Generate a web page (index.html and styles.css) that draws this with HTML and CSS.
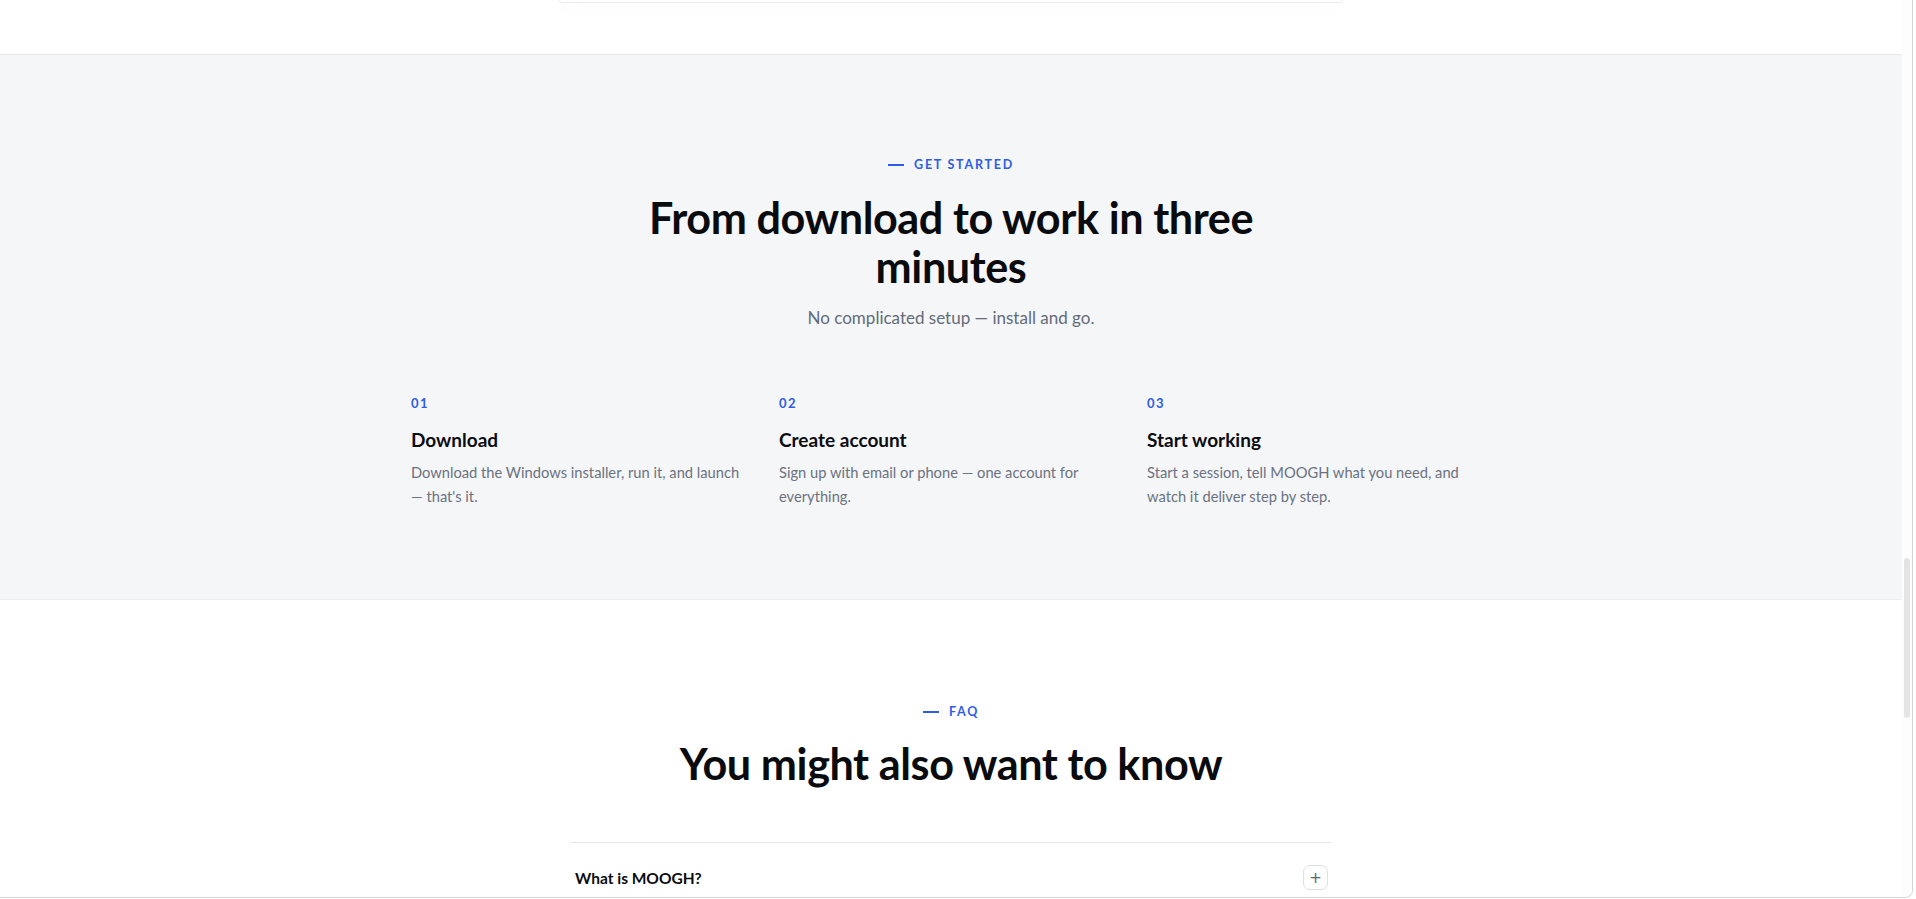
FILE: index.html
```html
<!DOCTYPE html>
<html lang="en">
<head>
  <meta charset="UTF-8">
  <title>MOOGH</title>
  <link rel="stylesheet" href="styles.css">
</head>
<body>

<div class="window">
  <div class="viewport">

    <div class="top-strip">
      <div class="card-edge"></div>
    </div>

    <section class="steps-section">
      <div class="eyebrow"><span class="dash"></span>GET STARTED</div>
      <h2 class="section-title narrow">From download to work in three minutes</h2>
      <p class="section-sub">No complicated setup — install and go.</p>

      <div class="steps">
        <div class="step">
          <div class="step-num">01</div>
          <h3>Download</h3>
          <p>Download the Windows installer, run it, and launch — that's it.</p>
        </div>
        <div class="step">
          <div class="step-num">02</div>
          <h3>Create account</h3>
          <p>Sign up with email or phone — one account for everything.</p>
        </div>
        <div class="step">
          <div class="step-num">03</div>
          <h3>Start working</h3>
          <p>Start a session, tell MOOGH what you need, and watch it deliver step by step.</p>
        </div>
      </div>
    </section>

    <section class="faq-section">
      <div class="eyebrow"><span class="dash"></span>FAQ</div>
      <h2 class="section-title">You might also want to know</h2>

      <div class="faq-list">
        <div class="faq-item">
          <span class="faq-q">What is MOOGH?</span>
          <button class="faq-toggle">+</button>
        </div>
      </div>
    </section>

  </div>
  <div class="scrollbar"><div class="thumb"></div></div>
</div>

</body>
</html>
```

FILE: styles.css
```css
html, body { margin: 0; padding: 0; background: #fff; }
body { font-family: Lato, "Noto Sans", sans-serif; color: #0b0c10; height: 899px; overflow: hidden; }

.window {
  box-sizing: border-box;
  width: 1913px;
  height: 898px;
  display: flex;
  border-right: 1px solid #d4d4d4;
  border-bottom: 1px solid #d4d4d4;
  border-bottom-right-radius: 8px;
  overflow: hidden;
}
.viewport { flex: 1; overflow: hidden; }

.scrollbar { width: 10px; background: #fdfdfd; }
.thumb {
  width: 6px;
  height: 160px;
  margin: 558px 0 0 2px;
  border-radius: 3px;
  background: #e4e4e4;
}

/* bottom of the pricing card from the section above */
.top-strip {
  height: 54px;
  border-bottom: 1px solid #e5e7eb;
  background: #fff;
}
.card-edge {
  width: 782px;
  height: 2px;
  margin: 0 auto;
  border: 1px solid #ededed;
  border-top: none;
  border-radius: 0 0 14px 14px;
  box-shadow: 0 4px 18px rgba(15, 23, 42, 0.06);
}

.steps-section {
  background: #f5f6f8;
  padding: 100px 0 91px;
  border-bottom: 1px solid #eceef1;
}
.faq-section { padding: 102px 0 0; }

.eyebrow {
  display: flex;
  justify-content: center;
  align-items: center;
  gap: 10px;
  font-size: 12.5px;
  line-height: 20px;
  font-weight: 700;
  letter-spacing: 0.14em;
  color: #2f5ce6;
}
.dash { width: 16px; height: 2px; background: #2f5ce6; }

.section-title {
  margin: 18px auto 0;
  font-size: 43.2px;
  line-height: 49px;
  font-weight: 700;
  letter-spacing: -0.01em;
  text-align: center;
  color: #0a0b0f;
}
.section-title.narrow { max-width: 640px; }
.faq-section .section-title { margin-top: 17px; }

.section-sub {
  margin: 14px 0 0;
  text-align: center;
  font-size: 17px;
  line-height: 26px;
  color: #646b78;
}

.steps {
  display: grid;
  grid-template-columns: repeat(3, 1fr);
  gap: 24px;
  max-width: 1080px;
  margin: 63px auto 0;
}
.step-num {
  font-size: 13px;
  line-height: 18px;
  font-weight: 700;
  letter-spacing: 0.12em;
  color: #2f5ce6;
}
.step h3 {
  margin: 14px 0 0;
  font-size: 19px;
  line-height: 28px;
  font-weight: 700;
  color: #0b0c10;
}
.step p {
  margin: 6px 0 0;
  max-width: 335px;
  font-size: 14.7px;
  line-height: 24px;
  color: #6b7280;
}

.faq-list {
  max-width: 760px;
  margin: 54px auto 0;
  border-top: 1px solid #e3e5e8;
}
.faq-item {
  display: flex;
  justify-content: space-between;
  align-items: center;
  padding: 22px 3px 22px 4px;
}
.faq-q { font-size: 15.5px; font-weight: 700; color: #0b0c10; }
.faq-toggle {
  box-sizing: border-box;
  width: 25px;
  height: 25px;
  padding: 0;
  border: 1px solid #dcdfe3;
  border-radius: 7px;
  background: #fff;
  color: #5b6472;
  font-family: "DejaVu Sans", sans-serif;
  font-size: 15px;
  line-height: 22px;
}
```
